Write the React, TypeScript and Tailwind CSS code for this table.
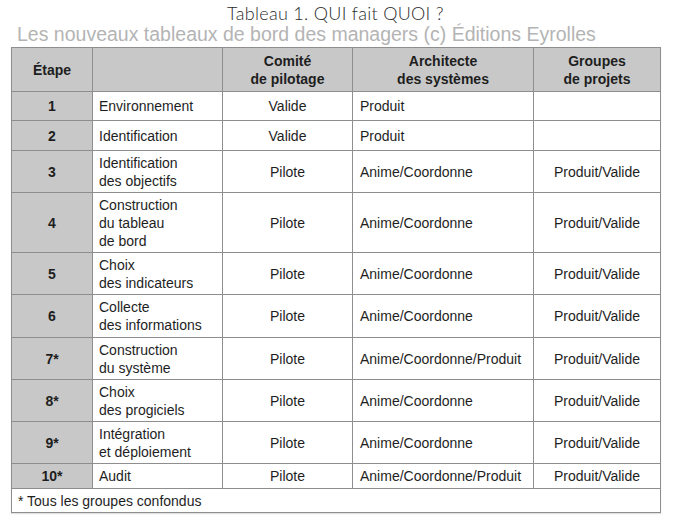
import React from "react";

type Row = { n: string; label: string[]; c: string; a: string; g: string; h: string };

const rows: Row[] = [
  { n: "1", label: ["Environnement"], c: "Valide", a: "Produit", g: "", h: "h-[29px]" },
  { n: "2", label: ["Identification"], c: "Valide", a: "Produit", g: "", h: "h-[30px]" },
  { n: "3", label: ["Identification", "des objectifs"], c: "Pilote", a: "Anime/Coordonne", g: "Produit/Valide", h: "h-[42px]" },
  { n: "4", label: ["Construction", "du tableau", "de bord"], c: "Pilote", a: "Anime/Coordonne", g: "Produit/Valide", h: "h-[60px]" },
  { n: "5", label: ["Choix", "des indicateurs"], c: "Pilote", a: "Anime/Coordonne", g: "Produit/Valide", h: "h-[42px]" },
  { n: "6", label: ["Collecte", "des informations"], c: "Pilote", a: "Anime/Coordonne", g: "Produit/Valide", h: "h-[43px]" },
  { n: "7*", label: ["Construction", "du système"], c: "Pilote", a: "Anime/Coordonne/Produit", g: "Produit/Valide", h: "h-[42px]" },
  { n: "8*", label: ["Choix", "des progiciels"], c: "Pilote", a: "Anime/Coordonne", g: "Produit/Valide", h: "h-[42px]" },
  { n: "9*", label: ["Intégration", "et déploiement"], c: "Pilote", a: "Anime/Coordonne", g: "Produit/Valide", h: "h-[42px]" },
  { n: "10*", label: ["Audit"], c: "Pilote", a: "Anime/Coordonne/Produit", g: "Produit/Valide", h: "h-[25px]" },
];

const cell = "border border-[#8e8e8e] p-0 align-middle";

export default function App() {
  return (
    <div className="w-[700px] h-[528px] bg-white pt-[3px] font-['Liberation_Sans',Arial,sans-serif] text-[#1e1e1e]">
      <div className="w-[671px] text-center h-[20px] leading-[20px] text-[18px] tracking-[0.3px] font-light text-[#2a2a2a] font-['Lato','DejaVu_Sans',sans-serif]">
        Tableau 1. QUI fait QUOI ?
      </div>
      <div className="pl-[17px] text-[19.5px] leading-[22px] text-[#b4b4b4]">
        Les nouveaux tableaux de bord des managers (c) Éditions Eyrolles
      </div>
      <table className="ml-[11px] mt-[2px] w-[649px] table-fixed border-collapse text-[14px] leading-[18px] shadow-[0_1px_1px_rgba(0,0,0,0.12)]">
        <colgroup>
          <col className="w-[81px]" />
          <col className="w-[130px]" />
          <col className="w-[130px]" />
          <col className="w-[181px]" />
          <col className="w-[127px]" />
        </colgroup>
        <thead>
          <tr className="h-[44px] bg-[#c8c8c8] font-bold">
            <th className={cell + " text-center"}>Étape</th>
            <th className={cell}></th>
            <th className={cell + " text-center"}>
              Comité
              <br />
              de pilotage
            </th>
            <th className={cell + " text-center"}>
              Architecte
              <br />
              des systèmes
            </th>
            <th className={cell + " text-center"}>
              Groupes
              <br />
              de projets
            </th>
          </tr>
        </thead>
        <tbody>
          {rows.map((r) => (
            <tr key={r.n} className={r.h}>
              <td className={cell + " bg-[#c8c8c8] text-center font-bold"}>{r.n}</td>
              <td className={cell + " pl-[6px]"}>
                {r.label.map((l, i) => (
                  <div key={i}>{l}</div>
                ))}
              </td>
              <td className={cell + " text-center"}>{r.c}</td>
              <td className={cell + " pl-[7px]"}>{r.a}</td>
              <td className={cell + " text-center"}>{r.g}</td>
            </tr>
          ))}
          <tr className="h-[24px]">
            <td colSpan={5} className={cell + " pl-[6px]"}>
              * Tous les groupes confondus
            </td>
          </tr>
        </tbody>
      </table>
    </div>
  );
}
